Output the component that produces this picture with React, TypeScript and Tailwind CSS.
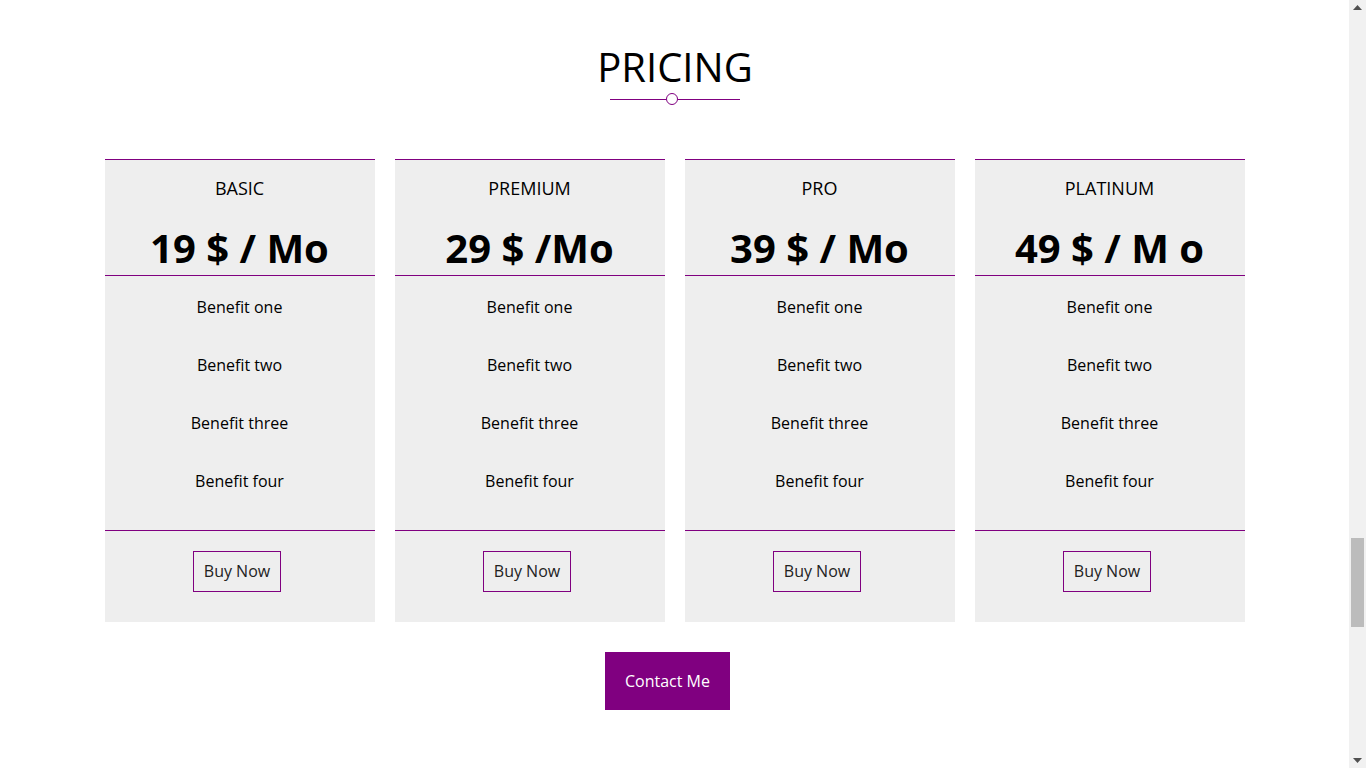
const plans = [
  { name: 'BASIC', price: '19 $ / Mo' },
  { name: 'PREMIUM', price: '29 $ /Mo' },
  { name: 'PRO', price: '39 $ / Mo' },
  { name: 'PLATINUM', price: '49 $ / M o' },
]

const benefits = ['Benefit one', 'Benefit two', 'Benefit three', 'Benefit four']

function PlanCard({ name, price }: { name: string; price: string }) {
  return (
    <div className="w-[270px] bg-[#eeeeee] border-t border-[#800080] text-black text-center">
      <div className="border-b border-[#800080] pt-[16px] pb-[2px]">
        <h3 className="text-[18px] leading-[25px]">{name}</h3>
        <div className="mt-[22px] text-[40px] leading-[50px] font-bold">{price}</div>
      </div>
      <ul className="flex flex-col gap-[34px] pt-[19px] pb-[36.5px] text-[16px]">
        {benefits.map((b) => (
          <li key={b} className="leading-6">{b}</li>
        ))}
      </ul>
      <div className="border-t border-[#800080] pt-[20px] pb-[30px] pl-[1px] pr-[6px] flex justify-center">
        <button className="h-[41px] w-[88px] border border-[#800080] text-[16px] text-[#222] leading-6">
          Buy Now
        </button>
      </div>
    </div>
  )
}

export default function App() {
  return (
    <div className="flex h-screen bg-white font-['Open_Sans',sans-serif] overflow-hidden">
      <main className="flex-1 flex flex-col items-center">
        <h2 className="mt-[43px] text-[40px] leading-[48px] text-black pl-[1px]">PRICING</h2>
        <div className="mt-[2px] flex items-center">
          <span className="w-[56px] h-px bg-[#800080]" />
          <span className="w-[12px] h-[12px] rounded-full border border-[#800080] bg-white" />
          <span className="w-[62px] h-px bg-[#800080]" />
        </div>
        <div className="mt-[54px] flex gap-5">
          {plans.map((p) => (
            <PlanCard key={p.name} {...p} />
          ))}
        </div>
        <button className="mt-[30px] mr-[14px] w-[125px] h-[58px] bg-[#800080] text-white text-[16px]">
          Contact Me
        </button>
      </main>
      <div className="w-[17px] bg-[#f1f1f1] flex flex-col items-center">
        <svg width="9" height="5" viewBox="0 0 9 5" className="mt-[5px]">
          <path d="M0 5 L4.5 0 L9 5 Z" fill="#505050" />
        </svg>
        <div className="flex-1 w-full flex flex-col px-[2px]">
          <div className="h-[528px]" />
          <div className="h-[89px] bg-[#bcbcbc]" />
        </div>
        <svg width="9" height="5" viewBox="0 0 9 5" className="mb-[5px]">
          <path d="M0 0 L9 0 L4.5 5 Z" fill="#505050" />
        </svg>
      </div>
    </div>
  )
}
